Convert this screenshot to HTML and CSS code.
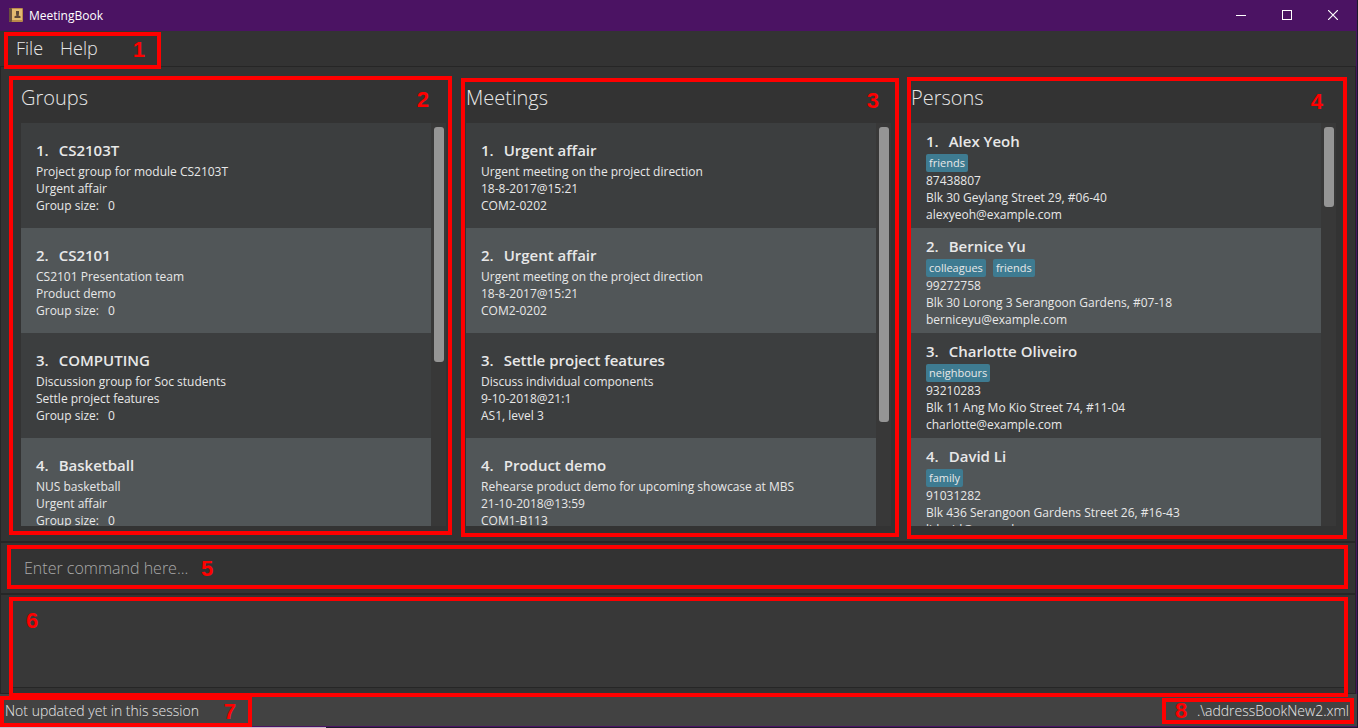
FILE: index.html
```html
<!DOCTYPE html>
<html lang="en">
<head>
<meta charset="utf-8">
<title>MeetingBook</title>
<link rel="stylesheet" href="styles.css">
</head>
<body>
<div class="window">
  <header class="titlebar">
    <svg class="app-icon" width="14" height="14" viewBox="0 0 14 14" aria-hidden="true">
      <rect x="0" y="0" width="14" height="14" rx="1" fill="#b98a4a"/>
      <rect x="3" y="1" width="10" height="11" fill="#e3b970"/>
      <rect x="0" y="0" width="3" height="14" rx="1" fill="#6b503c"/>
      <path d="M7 3h3v3l-.5 1.500 2 .8V10h-6V8.300l2-.8L7 6z" fill="#5d4638"/>
    </svg>
    <span class="app-name">MeetingBook</span>
    <div class="controls">
      <button class="control" aria-label="Minimize"><svg width="10" height="10"><path d="M0 5.500h10" stroke="#fff"/></svg></button>
      <button class="control" aria-label="Maximize"><svg width="10" height="10"><rect x=".5" y=".5" width="9" height="9" fill="none" stroke="#fff"/></svg></button>
      <button class="control" aria-label="Close"><svg width="10" height="10"><path d="M0 0l10 10M10 0L0 10" stroke="#fff" stroke-width="1.200"/></svg></button>
    </div>
  </header>
  <div class="frame">
    <nav class="menubar">
      <button class="menu">File</button>
      <button class="menu">Help</button>
      <div class="mark mark-menu"><span>1</span></div>
    </nav>
    <main class="panels">
      <section class="panel">
        <h2>Groups</h2>
        <div class="scroller">
          <ol class="list">
            <li><h3><span>1.</span><span>CS2103T</span></h3><p>Project group for module CS2103T</p><p>Urgent affair</p><p class="size"><span>Group size:</span><span>0</span></p></li>
            <li><h3><span>2.</span><span>CS2101</span></h3><p>CS2101 Presentation team</p><p>Product demo</p><p class="size"><span>Group size:</span><span>0</span></p></li>
            <li><h3><span>3.</span><span>COMPUTING</span></h3><p>Discussion group for Soc students</p><p>Settle project features</p><p class="size"><span>Group size:</span><span>0</span></p></li>
            <li><h3><span>4.</span><span>Basketball</span></h3><p>NUS basketball</p><p>Urgent affair</p><p class="size"><span>Group size:</span><span>0</span></p></li>
          </ol>
          <div class="track"><div class="thumb" style="height:59.5%"></div></div>
        </div>
        <div class="mark mark-groups"><span>2</span></div>
      </section>
      <section class="panel">
        <h2>Meetings</h2>
        <div class="scroller">
          <ol class="list">
            <li><h3><span>1.</span><span>Urgent affair</span></h3><p>Urgent meeting on the project direction</p><p>18-8-2017@15:21</p><p>COM2-0202</p></li>
            <li><h3><span>2.</span><span>Urgent affair</span></h3><p>Urgent meeting on the project direction</p><p>18-8-2017@15:21</p><p>COM2-0202</p></li>
            <li><h3><span>3.</span><span>Settle project features</span></h3><p>Discuss individual components</p><p>9-10-2018@21:1</p><p>AS1, level 3</p></li>
            <li><h3><span>4.</span><span>Product demo</span></h3><p>Rehearse product demo for upcoming showcase at MBS</p><p>21-10-2018@13:59</p><p>COM1-B113</p></li>
          </ol>
          <div class="track"><div class="thumb" style="height:74.7%"></div></div>
        </div>
        <div class="mark mark-meetings"><span>3</span></div>
      </section>
      <section class="panel">
        <h2>Persons</h2>
        <div class="scroller">
          <ol class="list">
            <li><h3><span>1.</span><span>Alex Yeoh</span></h3><div class="tags"><span>friends</span></div><p>87438807</p><p>Blk 30 Geylang Street 29, #06-40</p><p>alexyeoh@example.com</p></li>
            <li><h3><span>2.</span><span>Bernice Yu</span></h3><div class="tags"><span>colleagues</span><span>friends</span></div><p>99272758</p><p>Blk 30 Lorong 3 Serangoon Gardens, #07-18</p><p>berniceyu@example.com</p></li>
            <li><h3><span>3.</span><span>Charlotte Oliveiro</span></h3><div class="tags"><span>neighbours</span></div><p>93210283</p><p>Blk 11 Ang Mo Kio Street 74, #11-04</p><p>charlotte@example.com</p></li>
            <li><h3><span>4.</span><span>David Li</span></h3><div class="tags"><span>family</span></div><p>91031282</p><p>Blk 436 Serangoon Gardens Street 26, #16-43</p><p>lidavid@example.com</p></li>
          </ol>
          <div class="track"><div class="thumb" style="height:20.3%"></div></div>
        </div>
        <div class="mark mark-persons"><span>4</span></div>
      </section>
    </main>
    <form class="command">
      <input type="text" aria-label="Command" placeholder="Enter command here...">
      <div class="mark mark-command"><span>5</span></div>
    </form>
    <section class="result">
      <output class="result-text"></output>
      <div class="mark mark-result"><span>6</span></div>
    </section>
  </div>
  <footer class="status">
    <span>Not updated yet in this session</span>
    <span>.\addressBookNew2.xml</span>
    <div class="mark mark-sync"><span>7</span></div>
    <div class="mark mark-file"><span>8</span></div>
  </footer>
</div>
</body>
</html>
```
FILE: styles.css
```css
* { box-sizing: border-box; }
body {
  margin: 0;
  background: linear-gradient(to right, #c8b8cc 326px, #1c1a2c 326px);
  color: #e8e8e8;
  font-family: "Open Sans", "Noto Sans", sans-serif;
  font-size: 12px;
}
h2, h3, p, ol { margin: 0; padding: 0; }
button, input { font: inherit; color: inherit; background: none; border: 0; padding: 0; }

.window {
  display: flex;
  flex-direction: column;
  height: 100vh;
  margin-right: 1px;
  padding-bottom: 1px;
  overflow: hidden;
}
.titlebar {
  display: flex;
  align-items: center;
  flex: 0 0 31px;
  padding: 0 1px 1px 9px;
  background: #4b1363;
  color: #fff;
}
.app-name { margin-left: 6px; }
.controls { display: flex; margin-left: auto; }
.control { display: grid; place-items: center; width: 46px; height: 30px; }

.frame {
  display: flex;
  flex-direction: column;
  flex: 1;
  min-height: 0;
  background: #333;
  border-right: 1px solid #4b1363;
}
.menubar {
  position: relative;
  display: flex;
  gap: 17px;
  flex: 0 0 36px;
  padding: 0 0 1px 16px;
  border-bottom: 1px solid #262626;
}
.menu { font-size: 18px; font-weight: 300; }

.panels {
  display: grid;
  grid-template-columns: repeat(3, minmax(0, 1fr));
  gap: 20px;
  flex: 1;
  min-height: 0;
  padding: 13px 19px 15px 20px;
  border: 1px solid #262626;
  border-top: 0;
  border-bottom-width: 2px;
}
.panel { position: relative; display: flex; flex-direction: column; min-height: 0; }
.panel h2 { flex: 0 0 43px; font-size: 20px; font-weight: 300; line-height: 36px; }
.scroller { display: flex; flex: 1; min-height: 0; }
.list { flex: 1; list-style: none; overflow: hidden; }
.list li {
  display: flex;
  flex-direction: column;
  justify-content: center;
  height: 105px;
  padding: 0 15px;
  background: #3c3e3f;
}
.list li:nth-child(even) { background: #515658; }
.list h3 { display: flex; gap: 10px; font-size: 15px; font-weight: 600; line-height: 25px; }
.list p { line-height: 17px; white-space: nowrap; }
.size { display: flex; gap: 9px; }
.tags { display: flex; gap: 7px; }
.tags span {
  padding: 0 3px;
  border-radius: 2px;
  background: #3e7b91;
  font-size: 11px;
  line-height: 18px;
}
.track { flex: 0 0 15px; padding: 4px 2px 4px 3px; background: #383838; }
.thumb { border-radius: 3px; background: #959595; }

.command {
  position: relative;
  display: flex;
  flex: 0 0 52px;
  padding: 0 23px;
  border: 1px solid #262626;
  border-top: 0;
  border-bottom-width: 2px;
}
.command input { flex: 1; font-size: 16px; font-weight: 300; outline: 0; }
.command input::placeholder { color: #aaa; opacity: 1; }

.result {
  position: relative;
  display: flex;
  flex: 0 0 99px;
  padding: 5px 10px;
  border: 1px solid #262626;
  border-top: 0;
}
.result-text { flex: 1; background: #383838; border-bottom: 1px solid #262626; }

.status {
  position: relative;
  display: flex;
  justify-content: space-between;
  align-items: center;
  flex: 0 0 33px;
  padding: 0 8px 0 5px;
  background: #424242;
  border-bottom: 1px solid #4b1363;
  font-size: 14px;
  font-weight: 300;
}

/* Numbered callouts drawn over each region */
.mark {
  position: absolute;
  z-index: 1;
  border: 4px solid #f00;
  color: #f00;
  font: bold 22px/24px "Liberation Sans", sans-serif;
  pointer-events: none;
}
.mark span { position: absolute; }
.mark-menu { left: 4px; top: 1px; width: 157px; height: 37px; }
.mark-menu span { right: 12px; top: 2px; }
.mark-groups { inset: -4px -6px -9px -12px; }
.mark-groups span { right: 19px; top: 8px; }
.mark-meetings { inset: -2px -8px -11px -5px; }
.mark-meetings span { right: 16px; top: 7px; }
.mark-persons { inset: -3px -11px -13px -4px; }
.mark-persons span { right: 20px; top: 9px; }
.mark-command { inset: 2px 7px 4px 6px; }
.mark-command span { left: 190px; top: 8px; }
.mark-result { inset: 2px 7px -4px 8px; }
.mark-result span { left: 13px; top: 8px; }
.mark-sync { left: 0; top: 2px; width: 252px; height: 31px; }
.mark-sync span { right: 12px; top: 0; }
.mark-file { right: 3px; top: 4px; width: 192px; height: 26px; }
.mark-file span { left: 9px; top: -3px; }
```
